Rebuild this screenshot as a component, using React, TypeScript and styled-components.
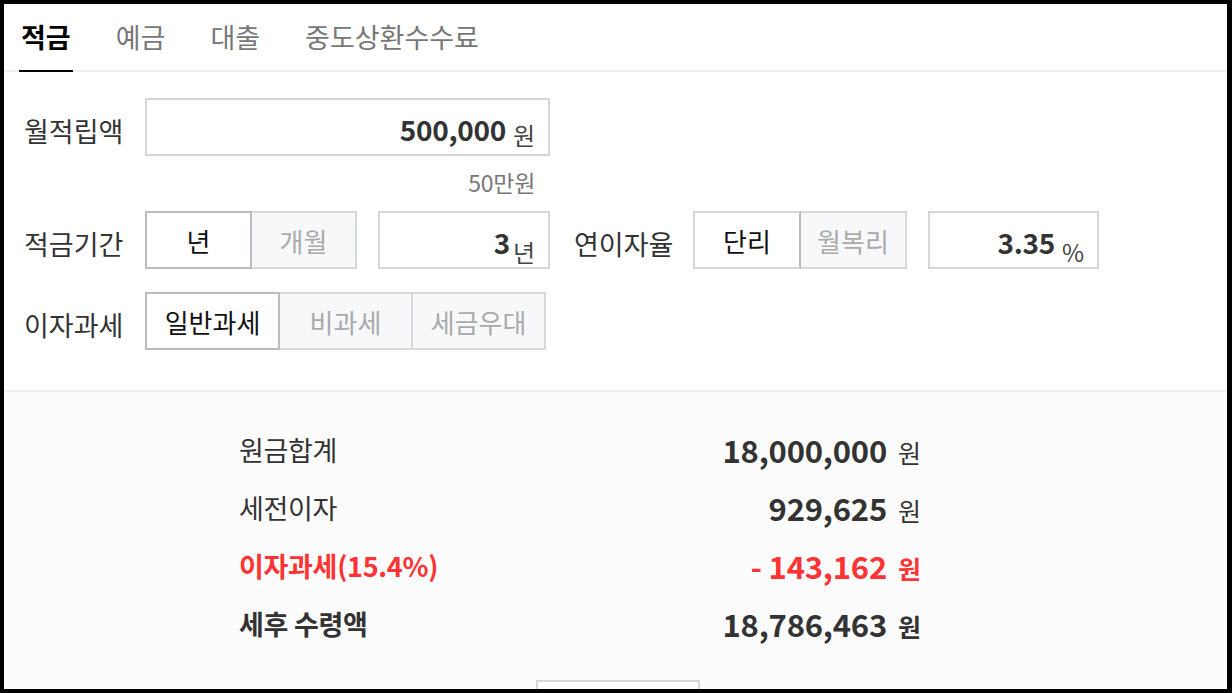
import React, { useState } from "react";
import styled, { createGlobalStyle } from "styled-components";

const GlobalStyle = createGlobalStyle`
  html, body {
    margin: 0;
    padding: 0;
    background: #fff;
  }
  body {
    font-family: "Noto Sans CJK KR", "Noto Sans", sans-serif;
    color: #333;
  }
  * {
    box-sizing: border-box;
  }
`;

const tabs = ["적금", "예금", "대출", "중도상환수수료"];

const results = [
  { label: "원금합계", value: "18,000,000" },
  { label: "세전이자", value: "929,625" },
  { label: "이자과세(15.4%)", value: "- 143,162", tone: "red" },
  { label: "세후 수령액", value: "18,786,463", tone: "strong" },
];

type Tone = "red" | "strong" | undefined;

const App: React.FC = () => {
  const [tab, setTab] = useState(0);
  const [unit, setUnit] = useState(0);
  const [rateType, setRateType] = useState(0);
  const [tax, setTax] = useState(0);

  return (
    <Frame>
      <GlobalStyle />
      <TabBar>
        {tabs.map((t, i) => (
          <Tab key={t} $active={tab === i} onClick={() => setTab(i)}>
            {t}
          </Tab>
        ))}
      </TabBar>

      <Form>
        <FieldRow>
          <Label>월적립액</Label>
          <InputBox $width={405}>
            <Amount>500,000</Amount>
            <Unit>원</Unit>
          </InputBox>
        </FieldRow>
        <Helper>50만원</Helper>

        <FieldRow>
          <Label>적금기간</Label>
          <ToggleGroup>
            {["년", "개월"].map((t, i) => (
              <ToggleButton key={t} $width={107} $on={unit === i} onClick={() => setUnit(i)}>
                {t}
              </ToggleButton>
            ))}
          </ToggleGroup>
          <InputBox $width={172} $gap={21}>
            <Amount>3</Amount>
            <Unit $low $tight>
              년
            </Unit>
          </InputBox>
          <Label $gap={24} $width={119}>
            연이자율
          </Label>
          <ToggleGroup>
            {["단리", "월복리"].map((t, i) => (
              <ToggleButton key={t} $width={108} $on={rateType === i} $soft onClick={() => setRateType(i)}>
                {t}
              </ToggleButton>
            ))}
          </ToggleGroup>
          <InputBox $width={171} $gap={21}>
            <Amount>3.35</Amount>
            <Unit $low>%</Unit>
          </InputBox>
        </FieldRow>

        <FieldRow $top={23}>
          <Label>이자과세</Label>
          <ToggleGroup>
            {["일반과세", "비과세", "세금우대"].map((t, i) => (
              <ToggleButton key={t} $width={135} $on={tax === i} onClick={() => setTax(i)}>
                {t}
              </ToggleButton>
            ))}
          </ToggleGroup>
        </FieldRow>
      </Form>

      <Result>
        <ResultList>
          {results.map((r) => (
            <ResultRow key={r.label} $tone={r.tone as Tone}>
              <ResultLabel>{r.label}</ResultLabel>
              <ResultValue>
                <strong>{r.value}</strong>
                <ResultUnit>원</ResultUnit>
              </ResultValue>
            </ResultRow>
          ))}
        </ResultList>
        <ResetButton type="button" aria-label="다시 계산하기" />
      </Result>
    </Frame>
  );
};

export default App;

const Frame = styled.div`
  height: 100vh;
  border: 4px solid #000;
  border-right-width: 5px;
  overflow: hidden;
  background: #fff;
`;

const TabBar = styled.nav`
  display: flex;
  gap: 41px;
  height: 68px;
  padding: 0 15px;
  border-bottom: 2px solid #f0f0f0;
`;

const Tab = styled.div<{ $active: boolean }>`
  display: flex;
  align-items: center;
  margin-bottom: -2px;
  padding: 0 2px 2px;
  font-size: 27px;
  font-weight: ${(p) => (p.$active ? 700 : 400)};
  color: ${(p) => (p.$active ? "#000" : "#777")};
  border-bottom: 2px solid ${(p) => (p.$active ? "#000" : "transparent")};
  cursor: pointer;
`;

const Form = styled.section`
  padding: 26px 20px 40px;
`;

const FieldRow = styled.div<{ $top?: number }>`
  display: flex;
  align-items: center;
  margin-top: ${(p) => p.$top ?? 0}px;
`;

const Label = styled.label<{ $gap?: number; $width?: number }>`
  flex: none;
  width: ${(p) => p.$width ?? 121}px;
  margin-left: ${(p) => p.$gap ?? 0}px;
  padding-top: 6px;
  font-size: 27px;
  color: #333;
  white-space: nowrap;
`;

const InputBox = styled.div<{ $width: number; $gap?: number }>`
  display: flex;
  align-items: baseline;
  justify-content: flex-end;
  width: ${(p) => p.$width}px;
  height: 58px;
  margin-left: ${(p) => p.$gap ?? 0}px;
  padding: 9px 13px 0;
  border: 2px solid #d6d6da;
  background: #fff;
`;

const Amount = styled.span`
  font-size: 28px;
  font-weight: 700;
  color: #333;
  letter-spacing: -0.3px;
`;

const Unit = styled.span<{ $low?: boolean; $tight?: boolean }>`
  position: relative;
  top: ${(p) => (p.$low ? 8 : 4)}px;
  margin-left: ${(p) => (p.$tight ? 3 : 7)}px;
  font-size: 24px;
  color: #444;
`;

const Helper = styled.div`
  width: 511px;
  padding: 11px 0 14px;
  text-align: right;
  font-size: 23px;
  line-height: 30px;
  color: #777;
  letter-spacing: -0.3px;
`;

const ToggleGroup = styled.div`
  display: flex;
`;

const ToggleButton = styled.button<{ $on: boolean; $width: number; $soft?: boolean }>`
  position: relative;
  z-index: ${(p) => (p.$on ? 1 : 0)};
  width: ${(p) => p.$width}px;
  height: 58px;
  padding: 0;
  font-family: inherit;
  font-size: 26px;
  color: ${(p) => (p.$on ? "#111" : "#aaa")};
  background: ${(p) => (p.$on ? "#fff" : "#f7f8fa")};
  border: 2px solid ${(p) => (p.$on && !p.$soft ? "#bcbcbc" : "#d8d8dc")};
  border-right-color: ${(p) => (p.$on ? "#bcbcbc" : "#d8d8dc")};
  cursor: pointer;

  & + & {
    margin-left: -2px;
  }
`;

const Result = styled.section`
  display: flex;
  flex-direction: column;
  align-items: center;
  padding-top: 28px;
  background: #fcfcfc;
  border-top: 2px solid #f0f0f0;
`;

const ResultList = styled.div`
  align-self: flex-start;
  width: 682px;
  margin-left: 235px;
`;

const ResultRow = styled.div<{ $tone: Tone }>`
  display: flex;
  align-items: center;
  justify-content: space-between;
  height: 58px;
  color: ${(p) => (p.$tone === "red" ? "#ff3333" : "#333")};
  font-weight: ${(p) => (p.$tone ? 700 : 400)};
`;

const ResultLabel = styled.span`
  font-size: 27px;
  letter-spacing: -0.3px;
`;

const ResultValue = styled.span`
  display: flex;
  align-items: baseline;

  strong {
    font-size: 31px;
    font-weight: 700;
    letter-spacing: -0.2px;
    padding-right: 2px;
  }
`;

const ResultUnit = styled.span`
  margin-left: 9px;
  font-size: 25px;
`;

const ResetButton = styled.button`
  flex: none;
  width: 164px;
  height: 52px;
  margin: 28px 0 0 4px;
  background: #fff;
  border: 2px solid #d6d6da;
`;
